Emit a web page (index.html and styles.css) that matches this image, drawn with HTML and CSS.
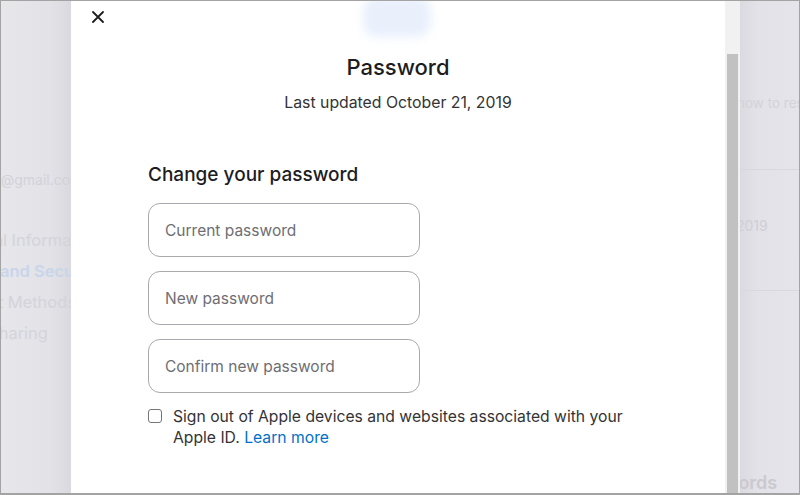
FILE: index.html
```html
<!DOCTYPE html>
<html>
<head>
<meta charset="utf-8">
<link rel="stylesheet" href="styles.css">
</head>
<body>
<div class="frame">
  <div class="side side-left">
    <div class="ghost g-mail">example@gmail.com</div>
    <div class="ghost g-info">Personal Information</div>
    <div class="ghost g-sec">Sign-In and Security</div>
    <div class="ghost g-pay">Payment Methods</div>
    <div class="ghost g-fam">Family Sharing</div>
  </div>
  <div class="modal">
    <div class="modal-body">
      <div class="blob"></div>
      <button class="close" aria-label="Close">
        <svg width="12" height="12" viewBox="0 0 12 12"><path d="M1 1L11 11M11 1L1 11" stroke="#1d1d1f" stroke-width="1.8" stroke-linecap="round"/></svg>
      </button>
      <h1 class="title">Password</h1>
      <p class="updated">Last updated October 21, 2019</p>
      <form class="form">
        <h2 class="form-title">Change your password</h2>
        <div class="field">Current password</div>
        <div class="field">New password</div>
        <div class="field">Confirm new password</div>
        <label class="check">
          <span class="box"></span>
          <span class="check-text">Sign out of Apple devices and websites associated with your Apple ID. <a class="link">Learn more</a></span>
        </label>
      </form>
    </div>
    <div class="scrollbar"><div class="thumb"></div></div>
  </div>
  <div class="side side-right">
    <div class="ghost r-how">how to reset</div>
    <div class="rule r-rule1"></div>
    <div class="ghost r-year">2019</div>
    <div class="rule r-rule2"></div>
    <div class="ghost r-words">Passwords</div>
  </div>
</div>
</body>
</html>
```

FILE: styles.css
```css
html, body {
  margin: 0;
  padding: 0;
  background: #ffffff;
}
body {
  font-family: Inter, "Noto Sans", "Liberation Sans", sans-serif;
  color: #1d1d1f;
}
.frame {
  width: 800px;
  height: 495px;
  box-sizing: border-box;
  border: 1px solid #a3a3a3;
  border-bottom-width: 2px;
  display: flex;
  overflow: hidden;
  background: #e3e2e8;
}
.side {
  overflow: hidden;
  display: flex;
  flex-direction: column;
  white-space: nowrap;
}
.side-left {
  width: 70px;
  flex: none;
  background: linear-gradient(90deg, #e6e6eb 0%, #e2e2e7 70%, #d9d9df 100%);
}
.side-right {
  flex: 1;
  background: linear-gradient(90deg, #dbdae0 0%, #e3e2e8 30%, #e5e4ea 100%);
}
.ghost {
  font-size: 16.5px;
  color: #d4d4d9;
  line-height: 20px;
}
.g-mail { margin-top: 169px; margin-left: -56px; font-size: 14px; color: #d2d2d7; }
.g-info { margin-top: 40px; margin-left: -62px; }
.g-sec { margin-top: 11px; margin-left: -63px; color: #c9d5ea; font-weight: 600; }
.g-pay { margin-top: 11px; margin-left: -66px; }
.g-fam { margin-top: 11px; margin-left: -68px; }
.r-how { margin-top: 92px; margin-left: -3px; font-size: 13.5px; color: #d3d3d8; }
.rule { height: 1px; background: #d9d8de; }
.r-rule1 { margin-top: 56px; }
.r-year { margin-top: 46px; margin-left: -4px; font-size: 14px; color: #cfcfd4; }
.r-rule2 { margin-top: 54px; }
.r-words { margin-top: 182px; margin-left: -58px; font-size: 18px; font-weight: 600; color: #cacacf; }

.modal {
  width: 669px;
  flex: none;
  display: flex;
  background: #ffffff;
}
.modal-body {
  position: relative;
  flex: 1;
  display: flex;
  flex-direction: column;
  align-items: center;
}
.blob {
  position: absolute;
  left: 292px;
  top: -4px;
  width: 68px;
  height: 40px;
  border-radius: 14px;
  background: #e9f0fc;
  filter: blur(5px);
}
.close {
  position: absolute;
  left: 20px;
  top: 9px;
  width: 14px;
  height: 14px;
  padding: 0;
  border: 0;
  background: none;
  display: flex;
  align-items: center;
  justify-content: center;
}
.title {
  margin: 52px 0 0;
  font-size: 22px;
  font-weight: 500;
  line-height: 28px;
}
.updated {
  margin: 12px 0 0;
  font-size: 15.8px;
  line-height: 20px;
  color: #333336;
}
.form {
  width: 500px;
  margin-top: 50px;
  display: flex;
  flex-direction: column;
}
.form-title {
  margin: 0 0 16px;
  font-size: 19px;
  font-weight: 500;
  line-height: 24px;
}
.field {
  width: 272px;
  height: 54px;
  box-sizing: border-box;
  border: 1px solid #a9a9ad;
  border-radius: 12px;
  padding: 0 16px;
  display: flex;
  align-items: center;
  font-size: 15.5px;
  color: #6e6e73;
  margin-bottom: 14px;
}
.check {
  display: flex;
  align-items: flex-start;
  gap: 11px;
  margin-top: -1px;
}
.box {
  width: 14px;
  height: 14px;
  box-sizing: border-box;
  border: 1px solid #767676;
  border-radius: 3px;
  flex: none;
  margin-top: 3px;
}
.check-text {
  font-size: 15.7px;
  line-height: 21px;
  color: #333336;
  width: 470px;
}
.link {
  color: #0070c9;
}
.scrollbar {
  width: 15px;
  flex: none;
  background: #f1f1f1;
  display: flex;
  flex-direction: column;
  padding: 53px 2px 0 2px;
  box-sizing: border-box;
}
.thumb {
  flex: 1;
  background: #c1c1c1;
}
```
